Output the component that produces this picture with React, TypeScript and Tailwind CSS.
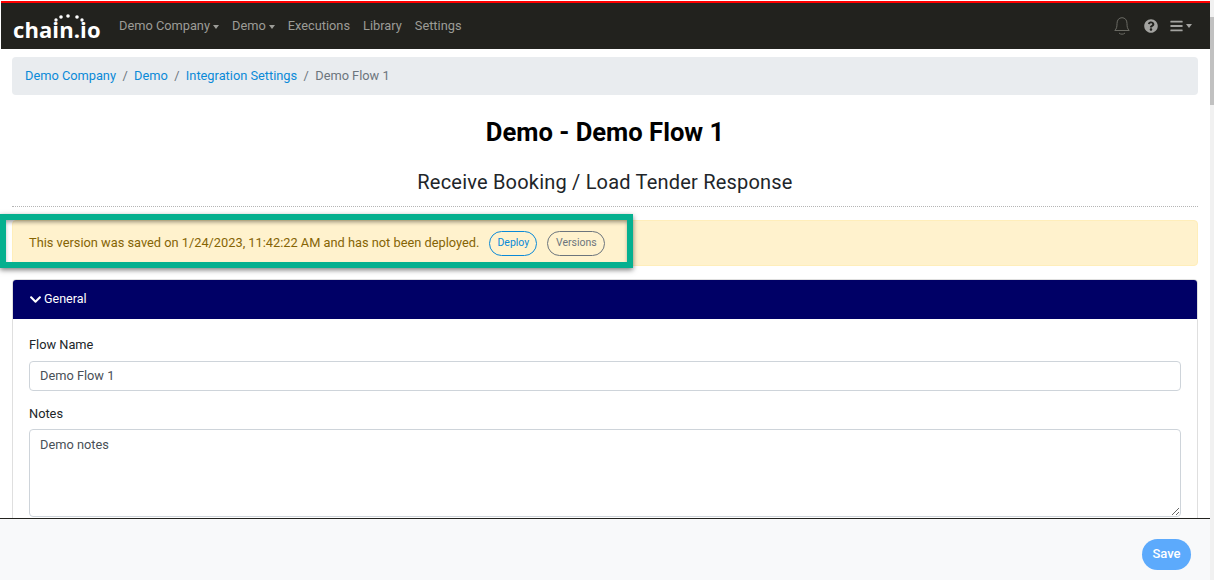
import {FaChevronDown, FaQuestionCircle, FaBars} from "react-icons/fa";

const Caret = () => (
    <span className="inline-block ml-[3px] align-middle border-x-[3.5px] border-t-[4px] border-x-transparent border-t-current"/>
)

const BellIcon = () => (
    <svg width="16" height="19" viewBox="0 0 16 19" fill="none" stroke="#6b6b64" strokeWidth="1">
        <path d="M0.8 13.5 C2.6 11.6 3 10 3 6.5 C3 3 5 0.7 8 0.7 C11 0.7 13 3 13 6.5 C13 10 13.4 11.6 15.2 13.5 Z"/>
        <path d="M5 16 C6.5 17.6 9.5 17.6 11 16"/>
    </svg>
)

const Logo = () => (
    <div className="relative w-[88px] h-[26px] text-white leading-none">
        <span className="absolute left-0 bottom-[-1px] text-[22px] font-bold tracking-[0.1px] font-['Open_Sans',sans-serif]">chain.io</span>
        <svg className="absolute left-[40px] top-[0px]" width="32" height="10" viewBox="0 0 32 10" fill="#fff">
            <circle cx="3" cy="7" r="1.7"/>
            <circle cx="8" cy="4" r="1.8"/>
            <circle cx="15" cy="3" r="1.8"/>
            <circle cx="24" cy="4" r="1.8"/>
            <circle cx="29" cy="7" r="1.7"/>
        </svg>
    </div>
)

const Navbar = () => (
    <div className="h-[48px] mt-[1px] ml-[1px] shrink-0 bg-[#22221e] border-t-[2px] border-t-[#fe0000] flex items-center pl-[12px] pr-[18px]">
        <Logo/>
        <div className="flex items-center ml-[18px] gap-[13px] text-[12.8px] text-[#9c9c97]">
            <span>Demo Company<Caret/></span>
            <span>Demo<Caret/></span>
            <span>Executions</span>
            <span>Library</span>
            <span>Settings</span>
        </div>
        <div className="ml-auto flex items-center text-[#a3a3a0]">
            <BellIcon/>
            <FaQuestionCircle className="w-[14px] h-[14px] ml-[14px]"/>
            <FaBars className="w-[13px] h-[14px] ml-[12px]"/>
            <Caret/>
        </div>
    </div>
)

const Breadcrumb = () => (
    <div className="h-[38px] bg-[#e9ecef] rounded flex items-center px-[13px] text-[12.8px] text-[#6c757d]">
        <span className="text-[#0b8ad8]">Demo Company</span>
        <span className="px-[6.4px]">/</span>
        <span className="text-[#0b8ad8]">Demo</span>
        <span className="px-[6.4px]">/</span>
        <span className="text-[#0b8ad8]">Integration Settings</span>
        <span className="px-[6.4px]">/</span>
        <span>Demo Flow 1</span>
    </div>
)

const App = () => {
    return (
        <div className="h-[580px] w-[1214px] overflow-hidden flex bg-white font-['Roboto',sans-serif] text-[#212529]">
            <div className="relative w-[1210px] h-full flex flex-col overflow-hidden">
                <Navbar/>

                <div className="flex-1 min-h-0 overflow-hidden px-[12px] pt-[8px]">
                    <Breadcrumb/>

                    <h1 className="text-[25.6px] font-bold text-black text-center leading-[29px] mt-[23px]">Demo - Demo Flow 1</h1>
                    <h2 className="text-[20px] text-[#212529] text-center leading-[24px] mt-[23px] tracking-[0.2px]">Receive Booking / Load Tender Response</h2>
                    <div className="border-b border-dotted border-[#b5b5b5] mt-[12px]"/>

                    {/* 저장 안내 */}
                    <div className="relative mt-[13px] h-[46px] bg-[#fff2cd] border border-[#ffeeba] rounded flex items-center pl-[16px] text-[12.8px] text-[#856404]">
                        <span>This version was saved on 1/24/2023, 11:42:22 AM and has not been deployed.</span>
                        <span className="ml-[10px] h-[25px] w-[48px] flex items-center justify-center rounded-full border border-[#0b8ad8] text-[#0b8ad8] text-[10.5px]">Deploy</span>
                        <span className="ml-[10px] h-[25px] w-[58px] flex items-center justify-center rounded-full border border-[#6c757d] text-[#6c757d] text-[10.5px]">Versions</span>
                        <div className="absolute left-[-13px] top-[-7px] w-[633px] h-[54px] border-[6px] border-[#05b08f] shadow-[0_2px_5px_rgba(0,0,0,0.5),inset_0_3px_4px_-1px_rgba(0,0,0,0.4)] pointer-events-none"/>
                    </div>

                    <div className="mt-[13px] border border-[#dfdfdf] rounded overflow-hidden">
                        <div className="h-[39px] bg-[#000066] text-white text-[12.5px] flex items-center pl-[16px]">
                            <FaChevronDown className="w-[13px] h-[13px] mr-[2px]"/>
                            General
                        </div>
                        <div className="px-[16px] pt-[17px] pb-[20px] text-[12.8px]">
                            <div className="leading-[18px]">Flow Name</div>
                            <input readOnly value="Demo Flow 1"
                                   className="mt-[7px] w-full h-[30px] border border-[#ced4da] rounded px-[10px] pb-[2px] text-[12.8px] text-[#495057] outline-none"/>
                            <div className="leading-[18px] mt-[14px]">Notes</div>
                            <textarea readOnly value="Demo notes"
                                      className="mt-[6px] block w-full h-[88px] border border-[#ced4da] rounded px-[10px] py-[5px] text-[12.8px] text-[#495057] outline-none"/>
                        </div>
                    </div>
                </div>

                <div className="absolute left-0 right-0 bottom-0 h-[62px] bg-[#f8f9fa] border-t border-t-[#22221e] flex items-center justify-end pr-[19px]">
                    <span className="mt-[9px] w-[49px] h-[31px] rounded-full bg-[#5caafc] text-white text-[13px] font-medium flex items-center justify-center">Save</span>
                </div>
            </div>

            {/* 스크롤바 */}
            <div className="w-[4px] h-full bg-[#f1f1f1]">
                <div className="h-[88px] mt-[17px] bg-[#c1c1c1]"/>
            </div>
        </div>
    )
}

export default App
